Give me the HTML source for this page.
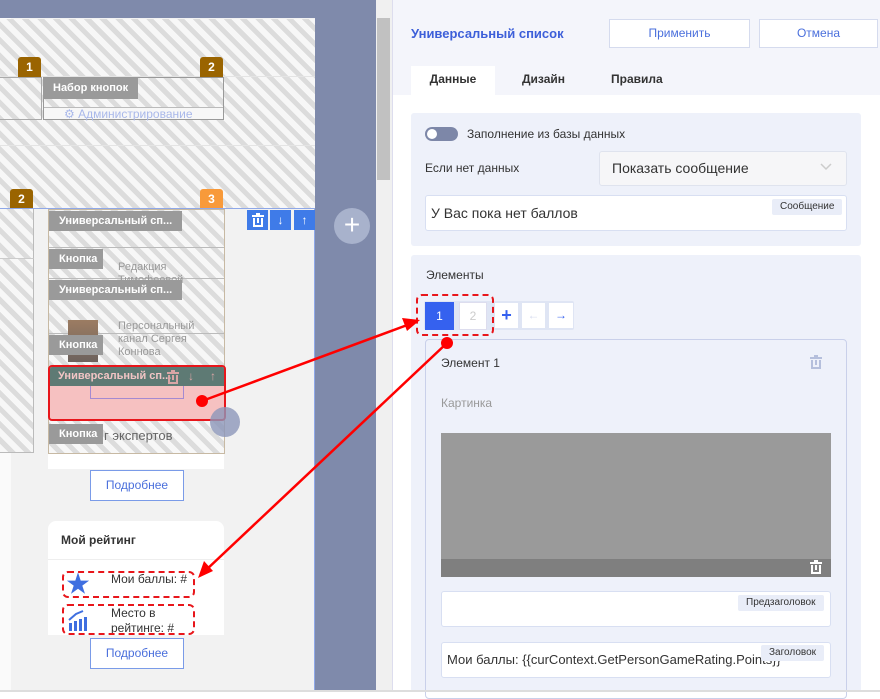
<!DOCTYPE html>
<html><head><meta charset="utf-8"><style>
*{box-sizing:border-box;margin:0;padding:0}
body{width:880px;height:692px;overflow:hidden;position:relative;background:#fff;font-family:"Liberation Sans","Noto Sans CJK SC",sans-serif;font-size:12px;color:#333}
.a{position:absolute}
.h{background:repeating-linear-gradient(45deg,#f7f7f7 0 6px,#dcdcdc 6px 11px)}
.lbl{position:absolute;background:#9a9a9a;color:#fff;font-weight:bold;font-size:11px;padding:0 10px;height:20px;line-height:20px;white-space:nowrap}
.badge{position:absolute;width:23px;height:20px;color:#fff;font-weight:bold;font-size:12px;text-align:center;line-height:20px;border-radius:3px 3px 0 0}
.btn{position:absolute;border:1px solid #7a9be8;color:#4a6fdc;background:#fff;text-align:center;font-size:12px}
.gt{color:#999;font-size:11px;position:absolute;line-height:13px}
.rb{position:absolute;border:1px solid #d8dff2;background:#fff;border-radius:3px}
.tag{position:absolute;background:#e9edf8;font-size:10px;color:#333;padding:0 8px;height:16px;line-height:16px;border-radius:2px}
</style></head><body>
<svg width="0" height="0" style="position:absolute"><defs><g id="tr"><rect x="1" y="2" width="12" height="2"/><rect x="5" y="0" width="4" height="2"/><path d="M2 5 H4 V12 H10 V5 H12 V14 H2 Z"/><rect x="6" y="5" width="2" height="5"/></g></defs></svg>
<div class="a" style="left:0;top:0;width:376px;height:692px;background:#7f8aab"></div>
<div class="a" style="left:0;top:18px;width:315px;height:672px;background:#f2f2f2"></div>
<div class="a" style="left:0;top:18px;width:11px;height:672px;background:#fafafa"></div>
<div class="a h" style="left:0;top:19px;width:315px;height:189px"></div>
<div class="a" style="left:0;top:76px;width:315px;height:1px;background:#e4e4e4"></div>
<div class="a" style="left:0;top:145px;width:315px;height:1px;background:#e4e4e4"></div>
<div class="badge" style="left:18px;top:57px;background:#9a6400">1</div>
<div class="badge" style="left:200px;top:57px;background:#9a6400">2</div>
<div class="a" style="left:0;top:77px;width:42px;height:43px;border:1px solid #aaa;border-left:none"></div>
<div class="a" style="left:43px;top:77px;width:181px;height:43px;border:1px solid #999;background:#f7f7f7"></div>
<div class="a h" style="left:44px;top:78px;width:179px;height:29px"></div>
<div class="a" style="left:44px;top:107px;width:179px;height:1px;background:#bbb"></div>
<div class="lbl" style="left:43px;top:78px;height:21px;line-height:21px">Набор кнопок</div>
<div class="a" style="left:64px;top:107px;color:#a9b8ea;font-size:12px">⚙ Администрирование</div>
<div class="badge" style="left:10px;top:189px;background:#9a6400">2</div>
<div class="badge" style="left:200px;top:189px;background:#f89a3a">3</div>
<div class="a" style="left:0;top:208px;width:315px;height:1px;background:#8fa8e8"></div>
<div class="a" style="left:314px;top:208px;width:1px;height:484px;background:#8fa8e8"></div>
<div class="a h" style="left:0;top:209px;width:34px;height:49px;border-right:1px solid #bbb"></div>
<div class="a h" style="left:0;top:258px;width:34px;height:195px;border-right:1px solid #bbb;border-top:1px solid #ccc;border-bottom:1px solid #bbb"></div>
<div class="a" style="left:48px;top:209px;width:176px;height:260px;background:#fff"></div>
<div class="a h" style="left:48px;top:209px;width:177px;height:245px;border:1px solid #c7b9a3"></div>
<div class="a" style="left:49px;top:247px;width:175px;height:1px;background:#bbb"></div>
<div class="a" style="left:49px;top:278px;width:175px;height:1px;background:#bbb"></div>
<div class="a" style="left:49px;top:333px;width:175px;height:1px;background:#bbb"></div>
<div class="gt" style="left:118px;top:261px">Редакция<br>Тимофеевой</div>
<div class="gt" style="left:118px;top:320px">Персональный<br>канал Сергея<br>Коннова</div>
<div class="a" style="left:68px;top:320px;width:30px;height:42px;background:linear-gradient(#9c7c62,#6d625d)"></div>
<div class="gt" style="left:104px;top:429px;font-size:13px;color:#666">г экспертов</div>
<div class="lbl" style="left:49px;top:211px">Универсальный сп...</div>
<div class="lbl" style="left:49px;top:249px;width:54px">Кнопка</div>
<div class="lbl" style="left:49px;top:280px">Универсальный сп...</div>
<div class="lbl" style="left:49px;top:335px;width:54px">Кнопка</div>
<div class="lbl" style="left:49px;top:424px;width:54px">Кнопка</div>
<div class="a" style="left:247px;top:210px;width:21px;height:20px;background:#3f7be8"><svg style="position:absolute;left:4px;top:3px" width="14" height="14" fill="#fff"><use href="#tr"/></svg></div>
<div class="a" style="left:270px;top:210px;width:21px;height:20px;background:#3f7be8;color:#fff;text-align:center;line-height:20px">↓</div>
<div class="a" style="left:294px;top:210px;width:21px;height:20px;background:#3f7be8;color:#fff;text-align:center;line-height:20px">↑</div>
<div class="a" style="left:334px;top:208px;width:36px;height:36px;border-radius:50%;background:#a8b2cc;color:#fff;font-size:28px;text-align:center;line-height:34px">+</div>
<div class="a" style="left:48px;top:365px;width:178px;height:56px;background:#f6c1c1;border:2px solid #e8161b;border-radius:4px;overflow:hidden">
 <div style="height:19px;background:#5e7a74;color:#f2c5c5;font-weight:bold;font-size:11px;line-height:19px;padding-left:8px">Универсальный сп...</div>
 <svg style="position:absolute;left:116px;top:3px" width="14" height="14" fill="#d9a5a5"><use href="#tr"/></svg>
 <span style="position:absolute;left:138px;top:2px;color:#d9a5a5">↓</span>
 <span style="position:absolute;left:160px;top:2px;color:#d9a5a5">↑</span>
 <div style="position:absolute;left:40px;top:19px;width:94px;height:13px;border:1px solid #a58ad1;border-top:none"></div>
</div>
<div class="a" style="left:210px;top:407px;width:30px;height:30px;border-radius:50%;background:rgba(140,150,185,.8)"></div>
<div class="btn" style="left:90px;top:470px;width:94px;height:31px;line-height:29px">Подробнее</div>
<div class="a" style="left:48px;top:521px;width:176px;height:114px;background:#fff;border-radius:8px 8px 0 0"></div>
<div class="a" style="left:48px;top:559px;width:176px;height:1px;background:#eee"></div>
<div class="a" style="left:61px;top:533px;font-weight:bold;font-size:12px;color:#333">Мой рейтинг</div>
<div class="a" style="left:66px;top:572px;color:#3f6fe0;font-size:24px;line-height:26px">★</div>
<div class="a" style="left:111px;top:572px;font-size:12px">Мои баллы: #</div>
<div class="a" style="left:111px;top:606px;font-size:12px;line-height:15px">Место в<br>рейтинге: #</div>
<svg class="a" style="left:68px;top:610px" width="22" height="22"><rect x="1" y="13" width="3" height="8" fill="#3f6fe0"/><rect x="6" y="11" width="3" height="10" fill="#3f6fe0"/><rect x="11" y="9" width="3" height="12" fill="#3f6fe0"/><rect x="16" y="7" width="3" height="14" fill="#3f6fe0"/><path d="M1 10 L8 4 L15 1" stroke="#3f6fe0" stroke-width="2" fill="none"/></svg>
<div class="btn" style="left:90px;top:638px;width:94px;height:31px;line-height:29px">Подробнее</div>
<div class="a" style="left:376px;top:0;width:16px;height:692px;background:#f0f0f0"></div>
<div class="a" style="left:377px;top:18px;width:13px;height:162px;background:#c1c1c1"></div>
<div class="a" style="left:392px;top:0;width:488px;height:692px;background:#fff;border-left:1px solid #dde"></div>
<div class="a" style="left:393px;top:0;width:487px;height:95px;background:#f4f5fb"></div>
<div class="a" style="left:411px;top:26px;color:#3d5fd9;font-weight:bold;font-size:13px">Универсальный список</div>
<div class="btn" style="left:609px;top:19px;width:141px;height:29px;line-height:27px;border-color:#d5dbee">Применить</div>
<div class="btn" style="left:759px;top:19px;width:119px;height:29px;line-height:27px;border-color:#d5dbee">Отмена</div>
<div class="a" style="left:411px;top:66px;width:84px;height:29px;background:#fff;text-align:center;line-height:27px;font-weight:bold;font-size:12px">Данные</div>
<div class="a" style="left:522px;top:72px;font-weight:bold;font-size:12px">Дизайн</div>
<div class="a" style="left:611px;top:72px;font-weight:bold;font-size:12px">Правила</div>
<div class="a" style="left:411px;top:113px;width:450px;height:133px;background:#eef1fa;border-radius:3px"></div>
<div class="a" style="left:425px;top:127px;width:33px;height:14px;border-radius:7px;background:#7d87a8"></div>
<div class="a" style="left:427px;top:129px;width:10px;height:10px;border-radius:50%;background:#fff"></div>
<div class="a" style="left:467px;top:127px;font-size:12px">Заполнение из базы данных</div>
<div class="a" style="left:425px;top:161px;font-size:12px">Если нет данных</div>
<div class="rb" style="left:599px;top:151px;width:248px;height:35px;background:#f6f6f8;border-color:#dfe3ee"></div>
<div class="a" style="left:612px;top:160px;font-size:14px;color:#333">Показать сообщение</div>
<svg class="a" style="left:820px;top:163px" width="12" height="8"><path d="M1 1 L6 6 L11 1" stroke="#ccc" stroke-width="1.5" fill="none"/></svg>
<div class="rb" style="left:425px;top:195px;width:422px;height:36px"></div>
<div class="a" style="left:431px;top:205px;font-size:14px">У Вас пока нет баллов</div>
<div class="tag" style="left:772px;top:199px">Сообщение</div>
<div class="a" style="left:411px;top:255px;width:450px;height:437px;background:#eef1fa;border-radius:3px"></div>
<div class="a" style="left:426px;top:268px;font-size:12px">Элементы</div>
<div class="a" style="left:424px;top:301px;width:150px;height:29px;background:#dfe5f4;border-radius:2px"></div>
<div class="a" style="left:425px;top:302px;width:29px;height:28px;background:#3561ef;color:#fff;text-align:center;line-height:28px">1</div>
<div class="a" style="left:459px;top:302px;width:28px;height:28px;background:#fff;border:1px solid #dde;color:#ccc;text-align:center;line-height:26px">2</div>
<div class="a" style="left:495px;top:303px;width:23px;height:25px;background:#fff;color:#3561ef;text-align:center;line-height:25px;font-size:18px;font-weight:bold">+</div>
<div class="a" style="left:522px;top:303px;width:23px;height:25px;background:#fff;color:#d6dcef;text-align:center;line-height:25px">←</div>
<div class="a" style="left:549px;top:303px;width:24px;height:25px;background:#fff;color:#3561ef;text-align:center;line-height:25px;font-weight:bold">→</div>
<div class="a" style="left:425px;top:339px;width:422px;height:360px;border:1px solid #c9d0ea;border-radius:4px"></div>
<div class="a" style="left:441px;top:356px;font-size:12px">Элемент 1</div>
<svg class="a" style="left:809px;top:355px" width="14" height="15" fill="#b5bfdc"><use href="#tr"/></svg>
<div class="a" style="left:441px;top:396px;font-size:12px;color:#999">Картинка</div>
<div class="a" style="left:441px;top:433px;width:390px;height:126px;background:#9a9a9a"></div>
<div class="a" style="left:441px;top:559px;width:390px;height:18px;background:#7f7f7f"></div>
<svg class="a" style="left:809px;top:560px" width="14" height="15" fill="#fff"><use href="#tr"/></svg>
<div class="rb" style="left:441px;top:591px;width:390px;height:36px"></div>
<div class="tag" style="left:738px;top:595px">Предзаголовок</div>
<div class="rb" style="left:441px;top:642px;width:390px;height:36px"></div>
<div class="a" style="left:447px;top:652px;font-size:13px">Мои баллы: {{curContext.GetPersonGameRating.Points}}</div>
<div class="tag" style="left:761px;top:645px">Заголовок</div>
<div class="a" style="left:0;top:690px;width:880px;height:2px;background:#ddd"></div>
<div class="a" style="left:416px;top:294px;width:78px;height:42px;border:2px dashed #e8161b;border-radius:6px"></div>
<div class="a" style="left:62px;top:571px;width:133px;height:27px;border:2px dashed #e8161b;border-radius:6px"></div>
<div class="a" style="left:62px;top:604px;width:133px;height:31px;border:2px dashed #e8161b;border-radius:6px"></div>
<svg class="a" style="left:0;top:0" width="880" height="692">
<g stroke="#f00" stroke-width="2.5" fill="#f00">
<line x1="202" y1="401" x2="410" y2="324"/>
<line x1="447" y1="343" x2="205" y2="571"/>
</g>
<polygon points="420,320 402,318 407,331" fill="#f00"/>
<polygon points="198,578 204,561 213,571" fill="#f00"/>
<circle cx="202" cy="401" r="6" fill="#f00"/>
<circle cx="447" cy="343" r="6" fill="#f00"/>
</svg>
</body></html>
